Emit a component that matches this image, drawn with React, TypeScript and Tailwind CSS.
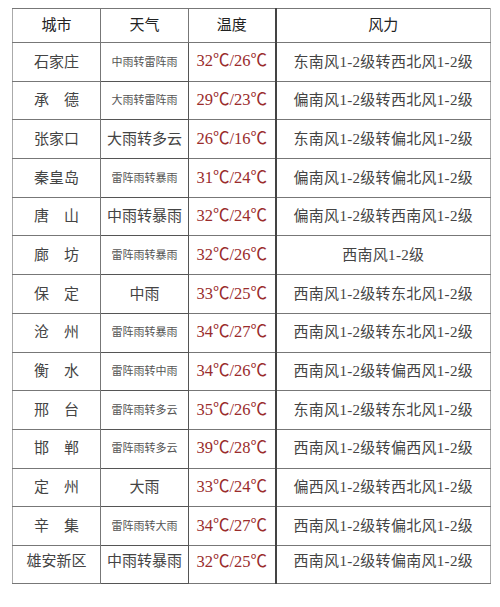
import React from "react";

type Row = { city: string; weather: string; small: boolean; temp: string; wind: string };

const rows: Row[] = [
  { city: "石家庄", weather: "中雨转雷阵雨", small: true, temp: "32℃/26℃", wind: "东南风1-2级转西北风1-2级" },
  { city: "承　德", weather: "大雨转雷阵雨", small: true, temp: "29℃/23℃", wind: "偏南风1-2级转西北风1-2级" },
  { city: "张家口", weather: "大雨转多云", small: false, temp: "26℃/16℃", wind: "东南风1-2级转偏北风1-2级" },
  { city: "秦皇岛", weather: "雷阵雨转暴雨", small: true, temp: "31℃/24℃", wind: "偏南风1-2级转偏北风1-2级" },
  { city: "唐　山", weather: "中雨转暴雨", small: false, temp: "32℃/24℃", wind: "偏南风1-2级转西南风1-2级" },
  { city: "廊　坊", weather: "雷阵雨转暴雨", small: true, temp: "32℃/26℃", wind: "西南风1-2级" },
  { city: "保　定", weather: "中雨", small: false, temp: "33℃/25℃", wind: "西南风1-2级转东北风1-2级" },
  { city: "沧　州", weather: "雷阵雨转暴雨", small: true, temp: "34℃/27℃", wind: "西南风1-2级转东北风1-2级" },
  { city: "衡　水", weather: "雷阵雨转中雨", small: true, temp: "34℃/26℃", wind: "西南风1-2级转偏西风1-2级" },
  { city: "邢　台", weather: "雷阵雨转多云", small: true, temp: "35℃/26℃", wind: "东南风1-2级转东北风1-2级" },
  { city: "邯　郸", weather: "雷阵雨转多云", small: true, temp: "39℃/28℃", wind: "西南风1-2级转偏西风1-2级" },
  { city: "定　州", weather: "大雨", small: false, temp: "33℃/24℃", wind: "偏西风1-2级转西北风1-2级" },
  { city: "辛　集", weather: "雷阵雨转大雨", small: true, temp: "34℃/27℃", wind: "西南风1-2级转偏北风1-2级" },
  { city: "雄安新区", weather: "中雨转暴雨", small: false, temp: "32℃/25℃", wind: "西南风1-2级转偏南风1-2级" },
];

const font = { fontFamily: '"Liberation Serif", "Noto Sans CJK SC", serif' };

export default function App() {
  return (
    <div className="w-[500px] h-[607px] bg-white pt-[8px] pl-[12px]" style={font}>
      <table className="border-collapse table-fixed w-[478px] text-[#3a3a3a]">
        <colgroup>
          <col className="w-[88px]" />
          <col className="w-[88px]" />
          <col className="w-[87px]" />
          <col className="w-[215px]" />
        </colgroup>
        <thead>
          <tr className="h-[34px]">
            <th className="border border-[#777] border-l-[#aaa] text-[15px] font-normal text-[#222] text-center align-middle">城市</th>
            <th className="border border-[#777] text-[15px] font-normal text-[#222] text-center align-middle">天气</th>
            <th className="border border-[#777] border-r-[#444] border-r-2 text-[15px] font-normal text-[#222] text-center align-middle">温度</th>
            <th className="border border-[#777] border-r-[#aaa] text-[15px] font-normal text-[#222] text-center align-middle">风力</th>
          </tr>
        </thead>
        <tbody>
          {rows.map((r, i) => {
            const last = i === rows.length - 1;
            return (
              <tr key={i} className={last ? "h-[38px]" : "h-[38.7px]"}>
                <td className={`border border-[#777] border-l-[#aaa] text-center text-[15px] text-[#444] whitespace-nowrap ${last ? "align-top pt-[4px]" : "align-middle"}`}>
                  {r.city}
                </td>
                <td className={`border border-[#555] text-center whitespace-nowrap ${r.small ? "text-[11px] text-[#555]" : "text-[15px] text-[#444]"} ${last ? "align-top pt-[4px]" : "align-middle"}`}>
                  {r.weather}
                </td>
                <td className={`border border-[#777] border-r-[#444] border-r-2 text-center text-[16.5px] text-[#9a2c2c] whitespace-nowrap ${last ? "align-top pt-[4px]" : "align-middle"}`}>
                  {r.temp}
                </td>
                <td className={`border border-[#777] border-r-[#aaa] text-center text-[15px] text-[#444] whitespace-nowrap tracking-[0.3px] ${last ? "align-top pt-[4px]" : "align-middle"}`}>
                  {r.wind}
                </td>
              </tr>
            );
          })}
        </tbody>
      </table>
    </div>
  );
}
